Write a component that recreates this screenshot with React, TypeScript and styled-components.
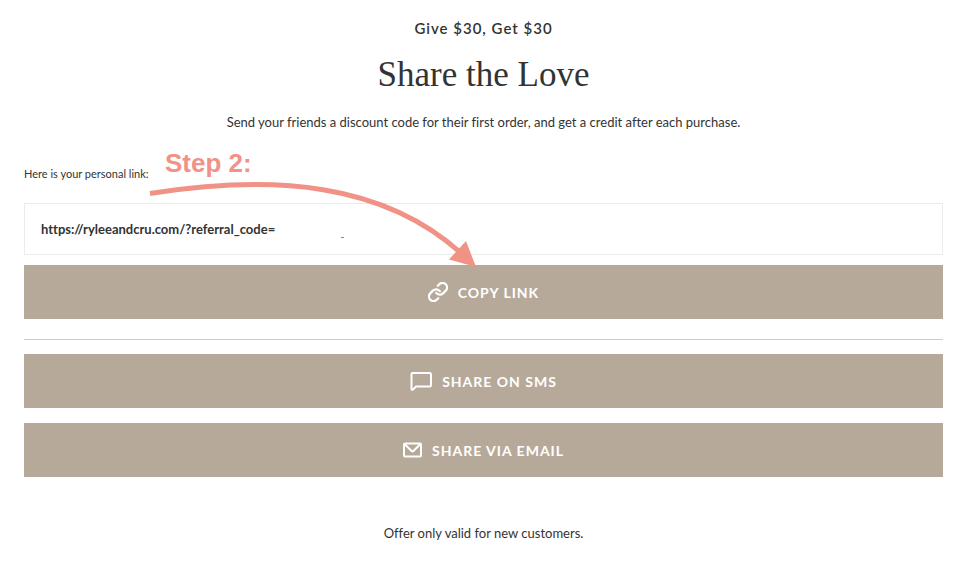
import React from "react";
import styled, { createGlobalStyle } from "styled-components";

const GlobalStyle = createGlobalStyle`
  *, *::before, *::after { box-sizing: border-box; }
  body {
    margin: 0;
    background: #fff;
    color: #333;
    font-family: Lato, "Liberation Sans", sans-serif;
    font-variant-ligatures: none;
  }
`;

const Page = styled.main`
  position: relative;
  padding: 18px 31px 24px 24px;
`;

const Intro = styled.header`
  text-align: center;
`;

const Eyebrow = styled.p`
  margin: 0;
  font-size: 15px;
  font-weight: 600;
  line-height: 20px;
  letter-spacing: 1px;
`;

const Title = styled.h1`
  margin: 12px 0;
  font-family: "Liberation Serif", serif;
  font-size: 35px;
  font-weight: 400;
  line-height: 50px;
`;

const Note = styled.p`
  margin: 0;
  font-size: 13px;
  line-height: 20px;
  text-align: center;
`;

const LinkField = styled.div`
  display: flex;
  flex-direction: column;
  gap: 19px;
  margin: 32px 0 10px;
`;

const FieldLabel = styled.label`
  font-size: 11px;
  line-height: 20px;
`;

const LinkInput = styled.input`
  width: 100%;
  height: 52px;
  padding: 0 16px;
  border: 1px solid #ebebeb;
  border-radius: 0;
  background: #fff;
  color: #333;
  font: inherit;
  font-size: 13px;
  font-weight: 700;
  outline: none;
`;

const ActionButton = styled.button`
  display: flex;
  align-items: center;
  justify-content: center;
  gap: 10px;
  width: 100%;
  height: 54px;
  padding: 0;
  border: 0;
  background: #b7a99a;
  color: #fff;
  font: inherit;
  font-size: 14px;
  font-weight: 700;
  letter-spacing: 1px;
  cursor: pointer;
`;

const Divider = styled.hr`
  margin: 20px 0 14px;
  border: 0;
  border-top: 1px solid #ccc;
`;

const ShareList = styled.div`
  display: flex;
  flex-direction: column;
  gap: 15px;
  margin-bottom: 46px;
`;

const Icon = styled.svg`
  flex: none;
  fill: none;
  stroke: currentColor;
  stroke-width: 2;
  stroke-linecap: round;
  stroke-linejoin: round;
`;

const StepLabel = styled.strong`
  position: absolute;
  top: 148px;
  left: 165px;
  color: #f19286;
  font-family: "Liberation Sans", Arial, sans-serif;
  font-size: 26px;
  line-height: 30px;
  pointer-events: none;
`;

const StepArrow = styled.svg`
  position: absolute;
  top: 170px;
  left: 140px;
  pointer-events: none;
`;

export default function App() {
  return (
    <>
      <GlobalStyle />
      <Page>
        <Intro>
          <Eyebrow>Give $30, Get $30</Eyebrow>
          <Title>Share the Love</Title>
          <Note>
            Send your friends a discount code for their first order, and get a
            credit after each purchase.
          </Note>
        </Intro>

        <LinkField>
          <FieldLabel htmlFor="referral">Here is your personal link:</FieldLabel>
          <LinkInput
            id="referral"
            readOnly
            value="https://ryleeandcru.com/?referral_code="
          />
        </LinkField>

        <ActionButton type="button">
          <Icon width="20" height="20" viewBox="1 1 22 22" aria-hidden="true">
            <path
              strokeWidth="2.5"
              d="M10 13a5 5 0 0 0 7.54.54l3-3a5 5 0 0 0-7.07-7.07l-1.72 1.71"
            />
            <path
              strokeWidth="2.5"
              d="M14 11a5 5 0 0 0-7.54-.54l-3 3a5 5 0 0 0 7.07 7.07l1.71-1.71"
            />
          </Icon>
          COPY LINK
        </ActionButton>

        <Divider />

        <ShareList>
          <ActionButton type="button">
            <Icon width="22" height="20" viewBox="0 0 22 20" aria-hidden="true">
              <path d="M2.5 2 H19.5 Q21 2 21 3.5 V14 Q21 15.5 19.5 15.5 H6 L3 18.6 Q1.5 19.3 1.5 17.5 V3 Q1.5 2 2.5 2 Z" />
            </Icon>
            SHARE ON SMS
          </ActionButton>
          <ActionButton type="button">
            <Icon width="19" height="16" viewBox="0 0 19 16" aria-hidden="true">
              <path d="M2 1.5 H17 Q18 1.5 18 2.5 V13.5 Q18 14.5 17 14.5 H2 Q1 14.5 1 13.5 V2.5 Q1 1.5 2 1.5 Z" />
              <path d="M2 2.5 L8.6 9 Q9.5 9.8 10.4 9 L17 2.5" />
            </Icon>
            SHARE VIA EMAIL
          </ActionButton>
        </ShareList>

        <Note>Offer only valid for new customers.</Note>

        <StepLabel>Step 2:</StepLabel>
        <StepArrow width="340" height="100" viewBox="0 0 340 100" aria-hidden="true">
          <path
            d="M10 23.5 C135 4 243 13 321 83"
            fill="none"
            stroke="#f19286"
            strokeWidth="5"
          />
          <path d="M336 97 L326 71 L309 89.5 Z" fill="#f19286" />
          <path d="M201 67.5 H204" stroke="#888" strokeWidth="1" />
        </StepArrow>
      </Page>
    </>
  );
}
